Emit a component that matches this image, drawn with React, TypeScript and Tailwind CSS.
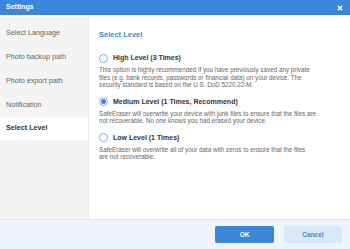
import React, { useState } from 'react';

const menu = ['Select Language', 'Photo backup path', 'Photo export path', 'Notification', 'Select Level'];

// lines broken where the original dialog breaks them
const levels = [
  {
    id: 'high',
    title: 'High Level (3 Times)',
    lines: [
      'This option is highly recommended if you have previously saved any private',
      'files (e.g. bank records, passwords or financial data) on your device. The',
      'security standard is based on the U.S. DoD 5220.22-M.',
    ],
  },
  {
    id: 'medium',
    title: 'Medium Level (1 Times, Recommend)',
    lines: [
      'SafeEraser will overwrite your device with junk files to ensure that the files are',
      'not recoverable. No one knows you had erased your device.',
    ],
  },
  {
    id: 'low',
    title: 'Low Level (1 Times)',
    lines: [
      'SafeEraser will overwrite all of your data with zeros to ensure that the files',
      'are not recoverable.',
    ],
  },
];

function Radio({ checked }: { checked: boolean }) {
  return (
    <span className="w-[9px] h-[9px] rounded-full border border-[#7fb0e6] bg-white flex items-center justify-center shrink-0">
      {checked && <span className="w-[5px] h-[5px] rounded-full bg-[#3a86d8]" />}
    </span>
  );
}

export default function App() {
  const [level, setLevel] = useState('medium');
  const active = 'Select Level';

  return (
    <div
      className="w-[350px] h-[249px] flex flex-col bg-white overflow-hidden"
      style={{ fontFamily: '"Liberation Sans", Arial, sans-serif' }}
    >
      {/* title bar */}
      <div className="h-[15px] bg-[#3a86d8] flex items-center justify-between px-[6px]">
        <span className="text-white text-[7px] font-bold">Settings</span>
        <svg width="6" height="6" viewBox="0 0 6 6" className="mr-[1px]">
          <path d="M0.8 0.8 L5.2 5.2 M5.2 0.8 L0.8 5.2" stroke="white" strokeWidth="1.4" />
        </svg>
      </div>

      <div className="flex flex-1 min-h-0 pt-[2px]">
        {/* sidebar */}
        <div className="w-[89px] flex flex-col border-r border-[#ececec]">
          <div className="bg-[#f4f4f4] h-[4px]" />
          {menu.map((m) => (
            <div
              key={m}
              className={
                m === active
                  ? 'h-[23px] flex items-center pl-[6px] bg-white text-[7.2px] font-bold text-[#333]'
                  : 'h-[24px] flex items-center pl-[6px] bg-[#f4f4f4] text-[7.2px] text-[#666]'
              }
            >
              {m}
            </div>
          ))}
          <div className="flex-1 bg-[#f4f4f4]" />
        </div>

        {/* content */}
        <div className="flex-1 pl-[10px] pt-[13px]">
          <div className="text-[7.5px] font-bold text-[#3a86d8] leading-[10px]">Select Level</div>
          <div className="mt-[13px] flex flex-col gap-[7.5px]">
            {levels.map((l) => (
              <div key={l.id} className="cursor-pointer" onClick={() => setLevel(l.id)}>
                <div className="flex items-center gap-[5px]">
                  <Radio checked={level === l.id} />
                  <span className="text-[7px] font-bold text-[#333] leading-[10px]">{l.title}</span>
                </div>
                <p className="mt-[3px] text-[6.3px] leading-[7.7px] text-[#666] whitespace-nowrap">
                  {l.lines.map((line, i) => (
                    <React.Fragment key={i}>
                      {line}
                      {i < l.lines.length - 1 && <br />}
                    </React.Fragment>
                  ))}
                </p>
              </div>
            ))}
          </div>
        </div>
      </div>

      {/* footer */}
      <div className="h-[30px] bg-[#eef5fd] border-t border-[#d8e7f8] flex items-center justify-end gap-[10px] pr-[8px]">
        <button className="w-[59px] h-[17px] rounded-[2px] bg-[#3a86d8] text-white text-[6.5px] font-bold">OK</button>
        <button className="w-[58px] h-[17px] rounded-[2px] bg-[#d8e9fc] text-[#3a86d8] text-[6.5px] font-bold">Cancel</button>
      </div>
    </div>
  );
}
